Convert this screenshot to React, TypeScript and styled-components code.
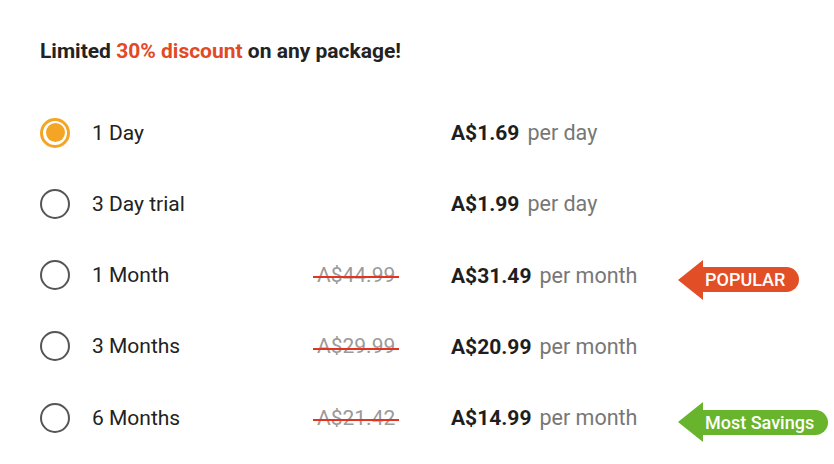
import React from "react";
import styled, { createGlobalStyle } from "styled-components";

const Global = createGlobalStyle`
  html, body { margin: 0; padding: 0; background: #fff; }
  body { font-family: Roboto, "Liberation Sans", Arial, sans-serif; color: #222; }
`;

const Page = styled.div`
  width: 834px;
  height: 464px;
  box-sizing: border-box;
  padding: 38px 0 0 40px;
  overflow: hidden;
`;

const Heading = styled.h1`
  margin: 0 0 33px 0;
  font-size: 21px;
  line-height: 26px;
  font-weight: 700;
  color: #222;
`;

const Accent = styled.span`
  color: #e24a26;
`;

const List = styled.div`
  display: flex;
  flex-direction: column;
`;

const Row = styled.label`
  display: grid;
  grid-template-columns: 52px 221px 138px 227px 1fr;
  align-items: center;
  height: 71.25px;
`;

const Radio = styled.span<{ $checked: boolean }>`
  width: 30px;
  height: 30px;
  box-sizing: border-box;
  border-radius: 50%;
  border: ${(p) => (p.$checked ? "3px solid #f5a524" : "2px solid #555")};
  display: flex;
  align-items: center;
  justify-content: center;
  &::after {
    content: "";
    display: ${(p) => (p.$checked ? "block" : "none")};
    width: 19px;
    height: 19px;
    border-radius: 50%;
    background: #f5a524;
  }
`;

const Label = styled.span`
  font-size: 21px;
  color: #222;
`;

const OldCell = styled.span`
  display: flex;
`;

const OldPrice = styled.span`
  position: relative;
  margin-left: 4px;
  font-size: 21px;
  color: #9a9a9a;
  &::after {
    content: "";
    position: absolute;
    left: -4px;
    right: -4px;
    top: 55%;
    height: 2px;
    background: #e2341f;
  }
`;

const Price = styled.span`
  font-size: 21px;
  white-space: nowrap;
`;

const Amount = styled.strong`
  font-weight: 700;
  color: #1e1e1e;
`;

const Unit = styled.span`
  color: #777;
  margin-left: 8px;
  font-size: 21.5px;
`;

const Badge = styled.span<{ $color: string }>`
  position: relative;
  justify-self: start;
  margin: 9px 0 0 24px;
  height: 25px;
  display: inline-flex;
  align-items: center;
  padding: 0 14px 0 3px;
  background: ${(p) => p.$color};
  border-radius: 0 13px 13px 0;
  color: #fff;
  font-size: 18px;
  font-weight: 500;
  white-space: nowrap;
  &::before {
    content: "";
    position: absolute;
    left: -24px;
    top: 50%;
    transform: translateY(-50%);
    border-top: 20px solid transparent;
    border-bottom: 20px solid transparent;
    border-right: 25px solid ${(p) => p.$color};
  }
`;

type Plan = {
  name: string;
  old?: string;
  price: string;
  unit: string;
  badge?: { text: string; color: string };
};

const plans: Plan[] = [
  { name: "1 Day", price: "A$1.69", unit: "per day" },
  { name: "3 Day trial", price: "A$1.99", unit: "per day" },
  { name: "1 Month", old: "A$44.99", price: "A$31.49", unit: "per month", badge: { text: "POPULAR", color: "#e24e26" } },
  { name: "3 Months", old: "A$29.99", price: "A$20.99", unit: "per month" },
  { name: "6 Months", old: "A$21.42", price: "A$14.99", unit: "per month", badge: { text: "Most Savings", color: "#68b42c" } },
];

export default function App() {
  const [sel, setSel] = React.useState(0);
  return (
    <>
      <Global />
      <Page>
        <Heading>
          Limited <Accent>30% discount</Accent> on any package!
        </Heading>
        <List>
          {plans.map((p, i) => (
            <Row key={p.name} onClick={() => setSel(i)}>
              <Radio $checked={sel === i} />
              <Label>{p.name}</Label>
              <OldCell>{p.old && <OldPrice>{p.old}</OldPrice>}</OldCell>
              <Price>
                <Amount>{p.price}</Amount>
                <Unit>{p.unit}</Unit>
              </Price>
              {p.badge ? <Badge $color={p.badge.color}>{p.badge.text}</Badge> : <span />}
            </Row>
          ))}
        </List>
      </Page>
    </>
  );
}
